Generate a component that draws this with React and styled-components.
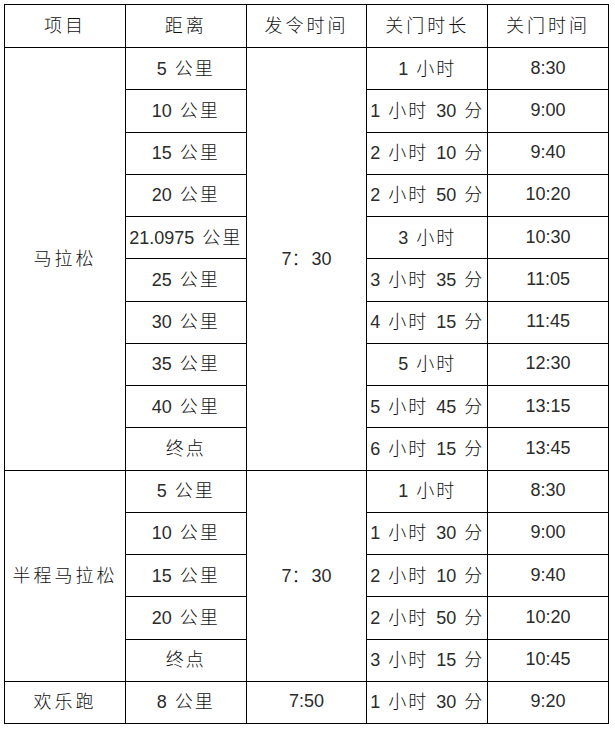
import styled, { createGlobalStyle } from 'styled-components';

// ------------------------------
// Global styles
// ------------------------------
const GlobalStyle = createGlobalStyle`
  html, body {
    margin: 0;
    padding: 0;
    background: #ffffff;
  }
  body {
    font-family: "Liberation Sans", "Noto Sans CJK SC", sans-serif;
    color: #2b2b2b;
  }
`;

// ------------------------------
// Styled Components
// ------------------------------
const Page = styled.div`
  padding: 4px 0 0 4px;
`;

const Table = styled.table`
  width: 605px;
  border-collapse: collapse;
  table-layout: fixed;
`;

const Row = styled.tr`
  height: ${(p) => (p.$head ? '43px' : '42.25px')};
`;

const Cell = styled.td`
  border: 1.3px solid #000;
  padding: 0 0 2px 0;
  text-align: center;
  vertical-align: middle;
  font-size: 18px;
  font-weight: 400;
  white-space: nowrap;
  line-height: 1;
  word-spacing: 3px;
`;

const HeadCell = styled(Cell).attrs({ as: 'th' })`
  font-weight: 400;
`;

// Chinese runs are set a little lighter and spread out, like the source document
const Han = styled.span`
  font-family: "Noto Sans CJK SC", sans-serif;
  font-weight: 300;
  color: #111;
  letter-spacing: ${(p) => (p.$wide ? '3px' : '2px')};
`;

// ------------------------------
// Data
// ------------------------------
const marathon = [
  ['5 公里', '1 小时', '8:30'],
  ['10 公里', '1 小时 30 分', '9:00'],
  ['15 公里', '2 小时 10 分', '9:40'],
  ['20 公里', '2 小时 50 分', '10:20'],
  ['21.0975 公里', '3 小时', '10:30'],
  ['25 公里', '3 小时 35 分', '11:05'],
  ['30 公里', '4 小时 15 分', '11:45'],
  ['35 公里', '5 小时', '12:30'],
  ['40 公里', '5 小时 45 分', '13:15'],
  ['终点', '6 小时 15 分', '13:45'],
];

const half = [
  ['5 公里', '1 小时', '8:30'],
  ['10 公里', '1 小时 30 分', '9:00'],
  ['15 公里', '2 小时 10 分', '9:40'],
  ['20 公里', '2 小时 50 分', '10:20'],
  ['终点', '3 小时 15 分', '10:45'],
];

const groups = [
  { name: '马拉松', start: '7：30', rows: marathon },
  { name: '半程马拉松', start: '7：30', rows: half },
  { name: '欢乐跑', start: '7:50', rows: [['8 公里', '1 小时 30 分', '9:20']] },
];

// split a label into Latin and Chinese runs
function Text({ children, wide }) {
  const parts = String(children).split(/([\u3000-\u9fff\uff00-\uffef]+)/);
  return parts.map((p, i) =>
    i % 2 === 1 ? (
      <Han key={i} $wide={wide}>
        {p}
      </Han>
    ) : (
      p
    )
  );
}

const headers = ['项目', '距离', '发令时间', '关门时长', '关门时间'];

// ------------------------------
// Component
// ------------------------------
function App() {
  return (
    <>
      <GlobalStyle />
      <Page>
        <Table>
          <thead>
            <Row $head>
              {headers.map((h) => (
                <HeadCell key={h}>
                  <Text wide>{h}</Text>
                </HeadCell>
              ))}
            </Row>
          </thead>
          <tbody>
            {groups.map((g) =>
              g.rows.map((r, i) => (
                <Row key={g.name + i}>
                  {i === 0 && (
                    <Cell rowSpan={g.rows.length}>
                      <Text wide>{g.name}</Text>
                    </Cell>
                  )}
                  <Cell>
                    <Text>{r[0]}</Text>
                  </Cell>
                  {i === 0 && (
                    <Cell rowSpan={g.rows.length}>
                      <Text>{g.start}</Text>
                    </Cell>
                  )}
                  <Cell>
                    <Text>{r[1]}</Text>
                  </Cell>
                  <Cell>
                    <Text>{r[2]}</Text>
                  </Cell>
                </Row>
              ))
            )}
          </tbody>
        </Table>
      </Page>
    </>
  );
}

export default App;
